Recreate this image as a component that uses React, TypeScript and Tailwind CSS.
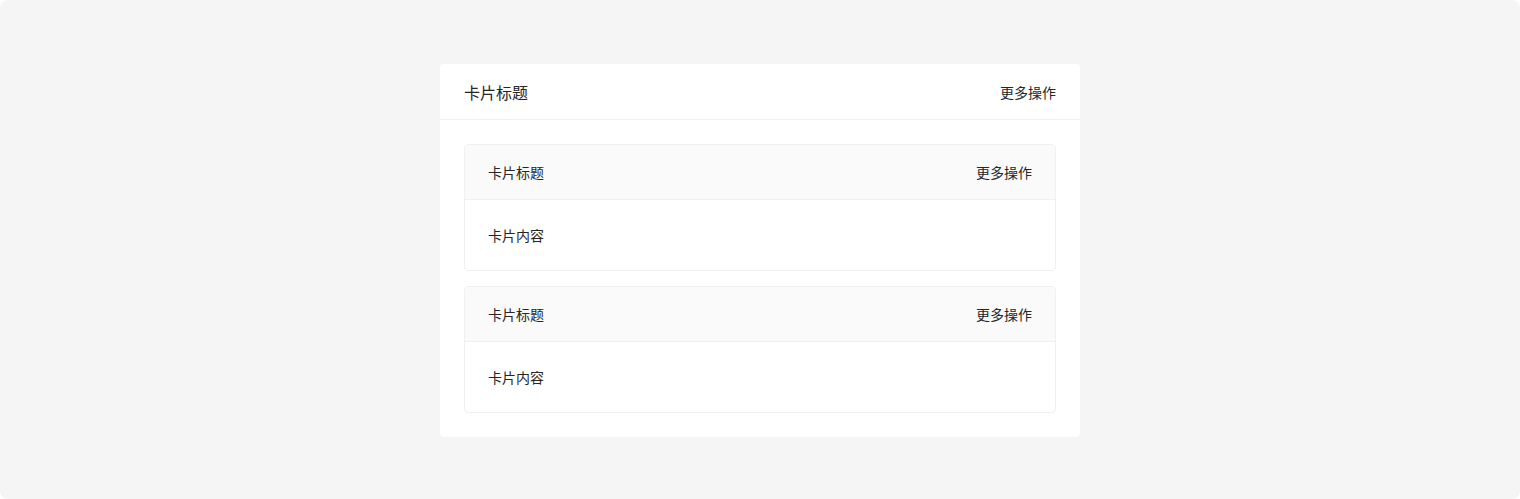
import React from 'react'

const font = { fontFamily: '"Noto Sans CJK SC", "Noto Sans", sans-serif' }

function InnerCard() {
  return (
    <div className="rounded border border-[#f0f0f0] bg-white overflow-hidden">
      <div className="flex h-[55px] items-center justify-between border-b border-[#f0f0f0] bg-[#fafafa] px-[23px]">
        <span className="text-sm text-[#262626]">卡片标题</span>
        <span className="text-sm text-[#262626]">更多操作</span>
      </div>
      <div className="px-[23px] py-6 text-sm leading-[22px] text-[#262626]">卡片内容</div>
    </div>
  )
}

export default function App() {
  return (
    <div style={font} className="flex h-[499px] w-full justify-center rounded-lg bg-[#f5f5f5] py-16">
      <div className="w-[640px] self-start rounded-sm bg-white">
        <div className="flex h-14 items-center justify-between border-b border-[#f0f0f0] px-6">
          <span className="text-base text-[#262626]">卡片标题</span>
          <span className="text-sm text-[#262626]">更多操作</span>
        </div>
        <div className="flex flex-col gap-[15px] p-6">
          <InnerCard />
          <InnerCard />
        </div>
      </div>
    </div>
  )
}
